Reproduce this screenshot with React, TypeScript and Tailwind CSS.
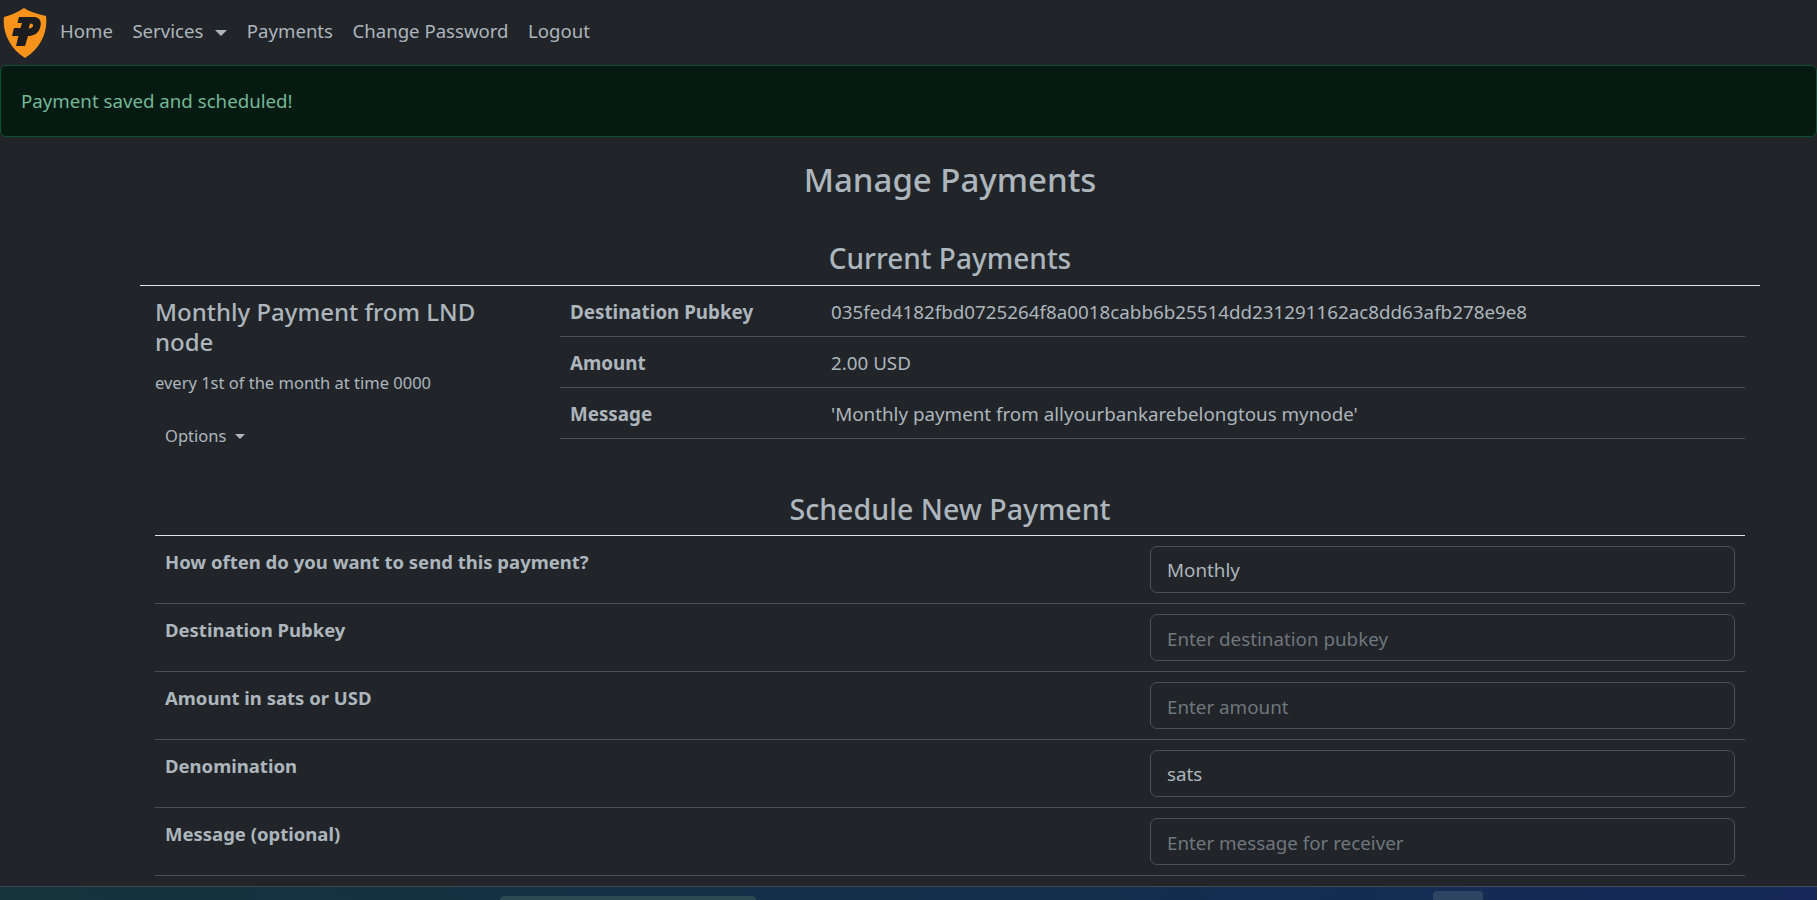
const font = "[font-family:'Noto_Sans',sans-serif]";

const details = [
  { label: "Destination Pubkey", value: "035fed4182fbd0725264f8a0018cabb6b25514dd231291162ac8dd63afb278e9e8" },
  { label: "Amount", value: "2.00 USD" },
  { label: "Message", value: "'Monthly payment from allyourbankarebelongtous mynode'" },
];

const fields = [
  { label: "How often do you want to send this payment?", value: "Monthly", select: true },
  { label: "Destination Pubkey", placeholder: "Enter destination pubkey" },
  { label: "Amount in sats or USD", placeholder: "Enter amount" },
  { label: "Denomination", value: "sats", select: true },
  { label: "Message (optional)", placeholder: "Enter message for receiver" },
];

function Logo() {
  return (
    <svg viewBox="0 0 44 50" className="h-[50px] w-[44px] shrink-0">
      <path d="M21 0 C27 4 35 6 43 8 C45 24 38 40 22 50 C7 41 -1 24 1 9 C9 7 15 4 21 0 Z" fill="#f7931a" />
      <path
        d="M16 9 L31 9 C37 9 39 14 37 20 C35 26 30 28 25 28 L22 38 L13 38 L15.5 28 L9 28 L11 20 L17.5 20 L19 15 L14.5 15 Z M27 15.5 L25.7 20.5 C28 20.5 29.5 19.5 30 18 C30.4 16.4 29.5 15.5 27 15.5 Z"
        fill="#1b1d20"
        fillRule="evenodd"
      />
    </svg>
  );
}

function Caret() {
  return <span className="ml-[12px] inline-block h-0 w-0 border-x-[6px] border-t-[6px] border-x-transparent border-t-current align-middle" />;
}

export default function App() {
  return (
    <div className={`${font} flex h-[900px] flex-col overflow-hidden bg-[#212529] text-[18.8px] text-[#adb5bd]`}>
      <nav className="flex h-[65px] shrink-0 items-center pl-[3px]">
        <Logo />
        <div className="mb-[4px] ml-[13px] flex gap-[19.5px] text-[18.6px] leading-[28px]">
          <a>Home</a>
          <a>
            Services
            <Caret />
          </a>
          <a>Payments</a>
          <a>Change Password</a>
          <a>Logout</a>
        </div>
      </nav>

      <div className="flex h-[72px] shrink-0 items-center rounded-[6px] border border-[#0f5132] bg-[#051b11] px-[20px] text-[18.7px] text-[#75b798]">
        Payment saved and scheduled!
      </div>

      <main className="flex min-h-0 flex-1 flex-col pr-[57px] pl-[140px]">
        <h1 className="mt-[21px] text-center text-[33px] leading-[44px] font-medium">Manage Payments</h1>
        <h2 className="mt-[38px] border-b border-[#dee2e6] pb-[9px] text-center text-[28px] leading-[36px] font-medium">
          Current Payments
        </h2>

        <div className="flex px-[15px]">
          <div className="w-[405px] shrink-0 pt-[11px]">
            <h3 className="pr-[40px] text-[24px] leading-[30px] font-medium">Monthly Payment from LND node</h3>
            <p className="mt-[14px] text-[16.5px] leading-[24px]">every 1st of the month at time 0000</p>
            <button className="mt-[29px] ml-[10px] flex items-center text-[16.5px] leading-[24px]">
              Options
              <span className="ml-[9px] inline-block h-0 w-0 border-x-[5px] border-t-[5px] border-x-transparent border-t-current" />
            </button>
          </div>
          <div className="flex-1">
            {details.map((row) => (
              <div key={row.label} className="flex h-[51px] items-center border-b border-[#495057] px-[10px] pt-[2px]">
                <span className="w-[261px] shrink-0 font-bold">{row.label}</span>
                <span>{row.value}</span>
              </div>
            ))}
          </div>
        </div>

        <div className="mx-[15px]">
          <h2 className="mt-[43px] border-b border-[#dee2e6] pb-[8px] text-center text-[28.6px] leading-[36px] font-medium">
            Schedule New Payment
          </h2>
          {fields.map((f) => (
            <div key={f.label} className="flex h-[68px] items-start justify-between border-b border-[#495057] pt-[10px] pr-[10px] pl-[10px]">
              <label className="pt-[2px] text-[18.5px] leading-[28px] font-bold">{f.label}</label>
              {f.select ? (
                <select className="h-[47px] w-[585px] appearance-none rounded-[7px] border border-[#495057] bg-transparent px-[16px] pt-[2px] outline-none">
                  <option>{f.value}</option>
                </select>
              ) : (
                <input
                  placeholder={f.placeholder}
                  className="h-[47px] w-[585px] rounded-[7px] border border-[#495057] bg-transparent px-[16px] pt-[2px] outline-none placeholder:text-[#6f767d]"
                />
              )}
            </div>
          ))}
        </div>
      </main>

      <footer className="flex h-[14px] shrink-0 items-end border-t border-[#3f4a52] bg-gradient-to-r from-[#14333a] to-[#16295a]">
        <div className="ml-[500px] h-[4px] w-[256px] rounded-t-[6px] bg-[#2c4a50]" />
        <div className="ml-[677px] h-[9px] w-[50px] rounded-t-[4px] bg-[#2d4560]" />
      </footer>
    </div>
  );
}
